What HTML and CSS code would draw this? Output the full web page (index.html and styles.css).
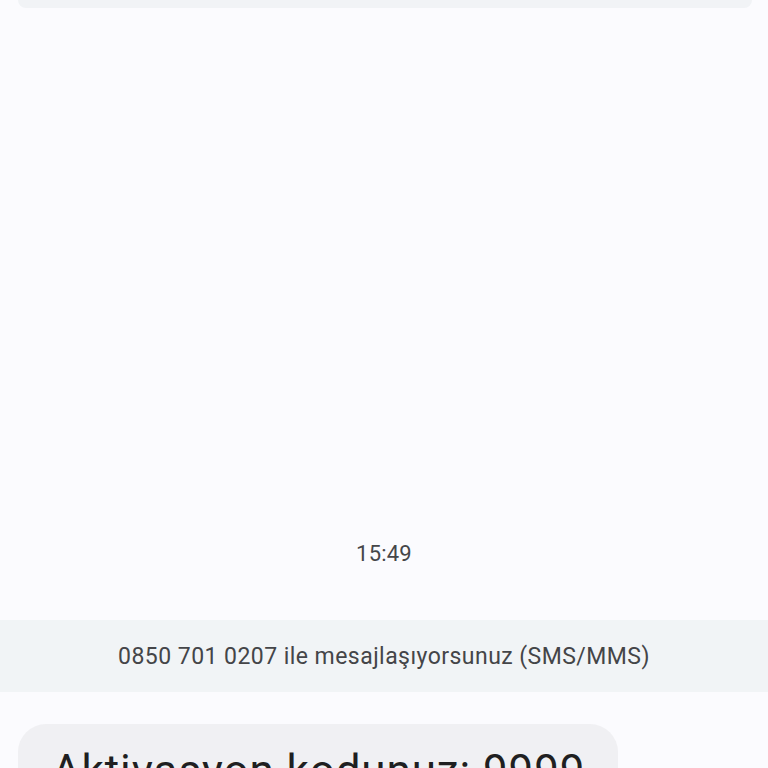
FILE: index.html
```html
<!DOCTYPE html>
<html lang="tr">
<head>
<meta charset="utf-8">
<link rel="stylesheet" href="styles.css">
</head>
<body>
<div class="screen">
  <div class="top-card"></div>
  <div class="spacer"></div>
  <div class="time">15:49</div>
  <div class="info-band">0850 701 0207 ile mesajlaşıyorsunuz (SMS/MMS)</div>
  <div class="bubble"><span class="bubble-text">Aktivasyon kodunuz: 9999</span></div>
</div>
</body>
</html>
```
FILE: styles.css
```css
html, body {
  margin: 0;
  padding: 0;
  background: #fbfbfe;
}
.screen {
  width: 768px;
  height: 768px;
  overflow: hidden;
  display: flex;
  flex-direction: column;
  font-family: Roboto, "Noto Sans", sans-serif;
}
.top-card {
  height: 8px;
  margin: 0 16px 0 18px;
  background: #f1f3f6;
  border-radius: 0 0 22px 22px;
  flex: none;
}
.spacer {
  height: 531px;
  flex: none;
}
.time {
  flex: none;
  height: 30px;
  line-height: 30px;
  text-align: center;
  font-size: 22px;
  letter-spacing: 0.2px;
  color: #454649;
}
.info-band {
  flex: none;
  margin-top: 51px;
  height: 72px;
  line-height: 73px;
  background: #f1f4f6;
  text-align: center;
  font-size: 23px;
  letter-spacing: 0.45px;
  color: #444548;
}
.bubble {
  flex: none;
  margin: 32px 0 0 18px;
  width: 600px;
  height: 120px;
  box-sizing: border-box;
  background: #f0f0f3;
  border-radius: 28px;
  padding: 21px 0 0 34px;
}
.bubble-text {
  font-size: 44px;
  letter-spacing: 0.9px;
  color: #1f1f21;
  line-height: 52px;
  white-space: nowrap;
}
```
